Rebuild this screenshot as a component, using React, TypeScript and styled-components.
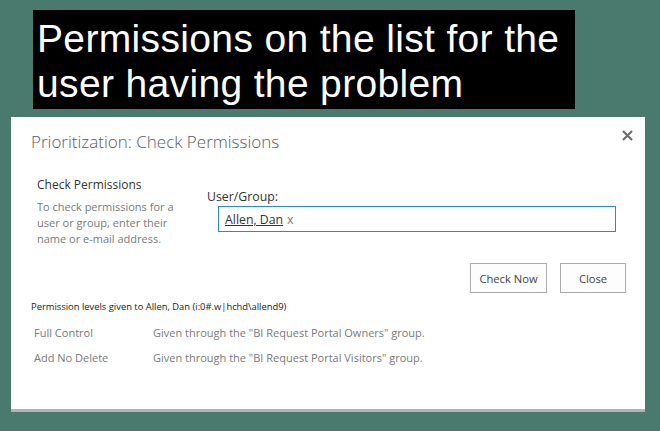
import React from 'react';
import styled, { createGlobalStyle } from 'styled-components';

const GlobalStyle = createGlobalStyle`
  html, body {
    margin: 0;
    padding: 0;
    background: #4a7a6e;
    width: 660px;
    height: 431px;
    overflow: hidden;
  }
`;

const Page = styled.div`
  display: flex;
  flex-direction: column;
  width: 660px;
  height: 431px;
`;

const Caption = styled.div`
  margin: 10px 0 0 33px;
  width: 542px;
  height: 99px;
  padding: 6px 0 0 4px;
  box-sizing: border-box;
  background: #000;
  color: #fff;
  font-family: 'Liberation Sans', Arial, sans-serif;
  font-size: 39px;
  letter-spacing: 0.35px;
  line-height: 45px;
  white-space: nowrap;
`;

const Dialog = styled.div`
  margin: 8px 0 0 11px;
  width: 634px;
  height: 295px;
  background: #fff;
  border-bottom: 3px solid #b3b3b3;
  box-sizing: border-box;
  position: relative;
  font-family: 'Open Sans', 'Noto Sans', sans-serif;
  display: flex;
  flex-direction: column;
  padding: 12px 19px 0 20px;
`;

const Title = styled.h1`
  margin: 0;
  font-size: 17px;
  font-weight: 300;
  color: #5e5a6a;
  line-height: 26px;
`;

const CloseX = styled.button`
  position: absolute;
  top: 10px;
  right: 10px;
  width: 16px;
  height: 16px;
  padding: 0;
  border: none;
  background: none;
  display: flex;
  align-items: center;
  justify-content: center;
`;

const Form = styled.div`
  display: flex;
  margin-top: 21px;
`;

const Side = styled.div`
  width: 170px;
  padding-left: 6px;
`;

const SideHead = styled.div`
  font-size: 12px;
  color: #333;
  line-height: 18px;
`;

const SideText = styled.div`
  margin-top: 5px;
  font-size: 11px;
  color: #7a7a7a;
  line-height: 16px;
`;

const Field = styled.div`
  flex: 1;
  padding-top: 12px;
`;

const Label = styled.div`
  font-size: 12.3px;
  color: #333;
  line-height: 18px;
`;

const Input = styled.div`
  margin: 0 10px 0 11px;
  height: 26px;
  border: 1px solid #2b88d8;
  box-sizing: border-box;
  padding-left: 6px;
  display: flex;
  align-items: center;
  font-size: 12.3px;
  color: #333;
`;

const Person = styled.span`
  text-decoration: underline;
  color: #333;
`;

const Remove = styled.span`
  color: #777;
  margin-left: 4px;
`;

const Buttons = styled.div`
  display: flex;
  justify-content: flex-end;
  gap: 13px;
  margin-top: 16px;
`;

const Btn = styled.button<{ $w: number }>`
  width: ${p => p.$w}px;
  height: 30px;
  border: 1px solid #ababab;
  background: #fdfdfd;
  color: #444;
  font-family: 'Open Sans', 'Noto Sans', sans-serif;
  font-size: 11.2px;
  padding: 0;
`;

const Levels = styled.div`
  margin-top: 7px;
  font-size: 9.4px;
  color: #222;
  line-height: 14px;
`;

const Row = styled.div`
  display: flex;
  padding-left: 3px;
  font-size: 11px;
  color: #7a7a7a;
  line-height: 16px;
  margin-top: 9px;
  &:first-of-type {
    margin-top: 11px;
  }
`;

const RowName = styled.div`
  width: 119px;
`;

const perms = [
  { name: 'Full Control', how: 'Given through the "BI Request Portal Owners" group.' },
  { name: 'Add No Delete', how: 'Given through the "BI Request Portal Visitors" group.' },
];

const App = () => {
  return (
    <Page>
      <GlobalStyle />
      <Caption>
        Permissions on the list for the<br />user having the problem
      </Caption>
      <Dialog>
        <Title>Prioritization: Check Permissions</Title>
        <CloseX aria-label="Close">
          <svg width="11" height="11" viewBox="0 0 11 11">
            <path d="M1 1 L10 10 M10 1 L1 10" stroke="#6f6f6f" strokeWidth="2.2" />
          </svg>
        </CloseX>
        <Form>
          <Side>
            <SideHead>Check Permissions</SideHead>
            <SideText>
              To check permissions for a<br />user or group, enter their<br />name or e-mail address.
            </SideText>
          </Side>
          <Field>
            <Label>User/Group:</Label>
            <Input>
              <Person>Allen, Dan</Person>
              <Remove>x</Remove>
            </Input>
          </Field>
        </Form>
        <Buttons>
          <Btn $w={77}>Check Now</Btn>
          <Btn $w={66}>Close</Btn>
        </Buttons>
        <Levels>Permission levels given to Allen, Dan (i:0#.w|hchd\allend9)</Levels>
        <div>
          {perms.map(p => (
            <Row key={p.name}>
              <RowName>{p.name}</RowName>
              <div>{p.how}</div>
            </Row>
          ))}
        </div>
      </Dialog>
    </Page>
  );
};

export default App;
